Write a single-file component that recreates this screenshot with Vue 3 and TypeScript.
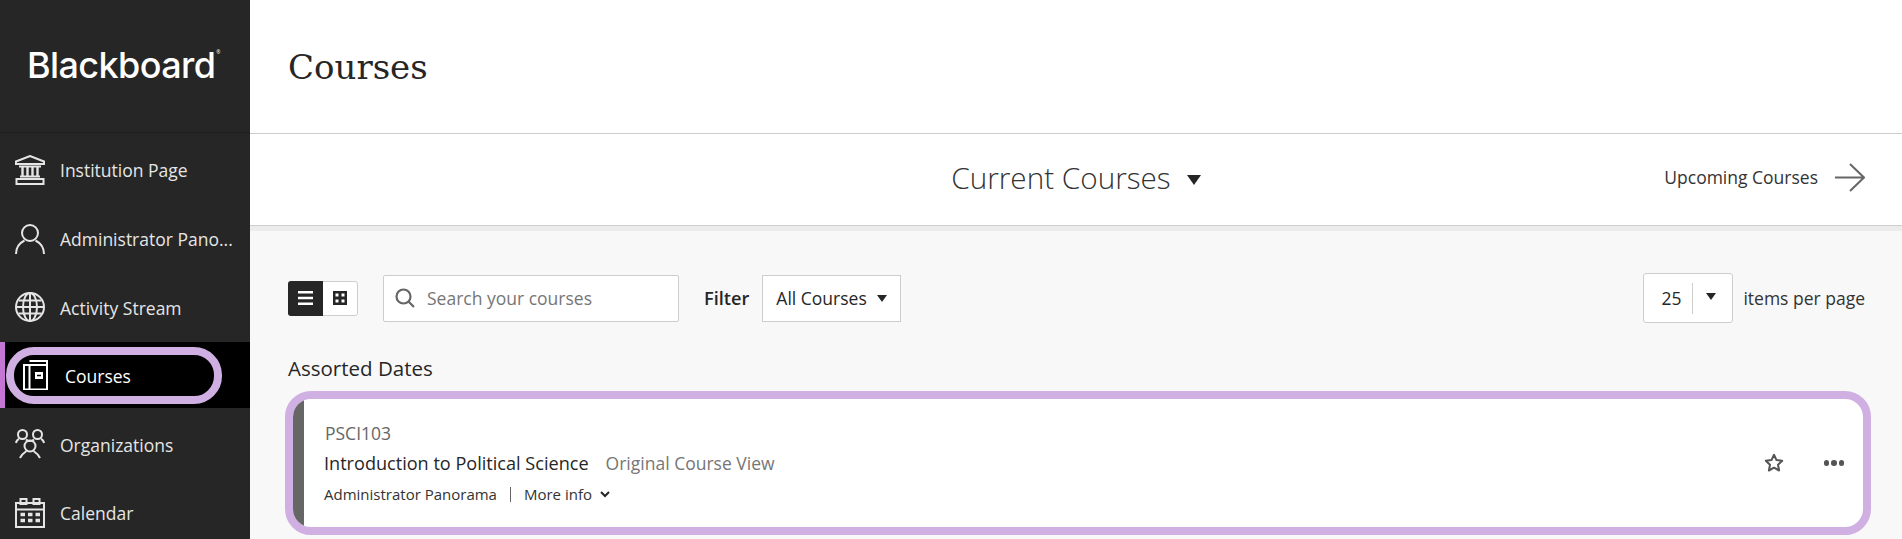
<script setup lang="ts">
interface NavItem { label: string; icon: string; active?: boolean }
const nav: NavItem[] = [
  { label: 'Institution Page', icon: 'inst' },
  { label: 'Administrator Pano...', icon: 'user' },
  { label: 'Activity Stream', icon: 'globe' },
  { label: 'Courses', icon: 'courses', active: true },
  { label: 'Organizations', icon: 'orgs' },
  { label: 'Calendar', icon: 'cal' },
]
</script>

<template>
  <div class="page">
    <aside class="side">
      <div class="logo"><span class="logo-text">Blackboard</span><span class="reg">®</span></div>
      <nav class="nav">
        <a v-for="n in nav" :key="n.label" class="item" :class="{ active: n.active }">
          <span class="ring">
            <svg v-if="n.icon === 'courses'" class="ico book" viewBox="0 0 25 30" fill="none" stroke="currentColor" stroke-width="2">
              <path d="M6.500 1h17.500v3M1 5h23v24.500H1zM6.500 5v24.500" />
              <rect x="12" y="12" width="8" height="7" fill="#fff" stroke="none" />
              <path d="M14 15.500h4" stroke="#000" stroke-width="1.500" />
            </svg>
            <svg v-else class="ico" viewBox="0 0 30 30" fill="none" stroke="currentColor" stroke-width="2">
              <template v-if="n.icon === 'inst'">
                <path d="M1 6.500 15 1l14 5.500V9H1z" />
                <path d="M4 11.500h22M5 21.500h20" />
                <path d="M7.500 12v9M12.500 12v9M17.500 12v9M22.500 12v9" stroke-width="2.400" />
                <path d="M1.500 24h27v5h-27z" />
              </template>
              <template v-else-if="n.icon === 'user'">
                <circle cx="15" cy="9" r="8" />
                <path d="M1 30c0-7 3.500-11 8.500-13.500M29 30c0-7-3.500-11-8.500-13.500" />
              </template>
              <template v-else-if="n.icon === 'globe'">
                <circle cx="15" cy="15" r="14" />
                <ellipse cx="15" cy="15" rx="7" ry="14" />
                <path d="M15 1v28M3.500 8.500h23M1 15h28M3.500 21.500h23" />
              </template>
              <template v-else-if="n.icon === 'orgs'">
                <circle cx="7.500" cy="5.500" r="4.500" />
                <circle cx="22.500" cy="5.500" r="4.500" />
                <circle cx="15" cy="17" r="5.500" />
                <path d="M1 14c.500-2.500 1.500-3.500 3-4M29 14c-.500-2.500-1.500-3.500-3-4M11 10.500c1 1 2.500 1.500 4 1.500s3-.500 4-1.500M5 29c1.500-3 3.500-5 6.500-7M25 29c-1.500-3-3.500-5-6.500-7" />
              </template>
              <template v-else>
                <path d="M1 5h28v24H1zM1 11.500h28" />
                <rect x="5.500" y="1" width="6" height="5" />
                <rect x="18.500" y="1" width="6" height="5" />
                <path d="M5.500 16.500h4.500M13 16.500h4.500M20.500 16.500h4.500M5.500 22.500h4.500M13 22.500h4.500M20.500 22.500h4.500" stroke-width="3.500" />
              </template>
            </svg>
            <span class="label">{{ n.label }}</span>
          </span>
        </a>
      </nav>
    </aside>
    <main class="main">
      <header class="head"><h1>Courses</h1></header>
      <section class="tabs">
        <div class="current">
          <span>Current Courses</span>
          <i class="tri big"></i>
        </div>
        <div class="upcoming">
          <span>Upcoming Courses</span>
          <svg viewBox="0 0 30 29" class="arrow" fill="none" stroke="#666" stroke-width="2"><path d="M0 14.500h29M15 1l14 13.500L15 28" /></svg>
        </div>
      </section>
      <section class="body">
        <div class="toolbar">
          <div class="toggle">
            <span class="tg on">
              <svg viewBox="0 0 15 14" width="15" height="14" fill="#fff"><path d="M0 0h15v2.600H0zM0 5.700h15v2.600H0zM0 11.400h15V14H0z" /></svg>
            </span>
            <span class="tg">
              <svg viewBox="0 0 14 14" width="14" height="14" fill="#262626"><path d="M0 0h14v14H0zM2.500 2.500v3h3v-3zM8.500 2.500v3h3v-3zM2.500 8.500v3h3v-3zM8.500 8.500v3h3v-3z" fill-rule="evenodd" /></svg>
            </span>
          </div>
          <div class="search">
            <svg viewBox="0 0 20 20" width="20" height="20" fill="none" stroke="#666" stroke-width="2.200"><circle cx="8.500" cy="8.500" r="7" /><path d="M13.500 13.500l5.500 5.500" /></svg>
            <span>Search your courses</span>
          </div>
          <b class="filter">Filter</b>
          <div class="select"><span>All Courses</span><i class="tri small"></i></div>
          <div class="pager">
            <div class="per"><span class="num">25</span><span class="sep"></span><i class="tri small up"></i></div>
            <span class="pp">items per page</span>
          </div>
        </div>
        <h2 class="group">Assorted Dates</h2>
        <article class="card">
          <div class="stripe"></div>
          <div class="info">
            <div class="code">PSCI103</div>
            <div class="title"><span class="t">Introduction to Political Science</span><span class="view">Original Course View</span></div>
            <div class="meta"><span>Administrator Panorama</span><span class="bar"></span><span>More info</span>
              <svg viewBox="0 0 10 7" width="10" height="7" fill="none" stroke="#262626" stroke-width="2"><path d="M1 1l4 4 4-4" /></svg>
            </div>
          </div>
          <div class="acts">
            <svg viewBox="0 0 20 20" width="20" height="20" fill="none" stroke="#555" stroke-width="2" stroke-linejoin="round"><path d="M10 1.800l2.500 5.300 5.700.700-4.200 4 1.100 5.700-5.100-2.800-5.100 2.800 1.100-5.700-4.200-4 5.700-.700z" /></svg>
            <span class="dots"><i></i><i></i><i></i></span>
          </div>
        </article>
      </section>
    </main>
  </div>
</template>

<style>
html, body { margin: 0; background: #f8f8f8; }
</style>

<style scoped>
.page { display: flex; width: 1902px; height: 539px; overflow: hidden; font-family: "Open Sans", sans-serif; color: #262626; }
.side { width: 250px; flex: none; background: #262626; color: #e5e5e5; }
.logo { border-bottom: 1px solid #1d1d1d; display: flex; align-items: center; color: #fff; padding: 0 0 3px 27px; height: 129px; }
.logo-text { font-family: Inter, sans-serif; font-size: 36px; font-weight: 500; letter-spacing: -0.6px; }
.reg { font-size: 5px; align-self: flex-start; margin-top: 49px; margin-left: 1px; }
.nav { display: flex; flex-direction: column; gap: 2px; padding-top: 3.700px; }
.item { height: 66.600px; display: flex; align-items: center; padding-left: 15px; }
.ring { display: flex; align-items: center; gap: 15px; min-width: 0; }
.ico { width: 30px; height: 30px; flex: none; color: #e5e5e5; }
.label { font-size: 17.500px; white-space: nowrap; position: relative; top: 0.500px; }
.item.active { background: #000; color: #fff; border-left: 5px solid #c575d4; padding-left: 1px; height: 66px; margin-bottom: 0.600px; }
.item.active .ico { color: #fff; width: 25px; height: 30px; }
.item.active .ring { width: 191px; height: 41px; border: 8px solid #d0afe3; border-radius: 28px; padding-left: 9px; gap: 17px; }
.main { flex: 1; min-width: 0; display: flex; flex-direction: column; }
.head { height: 133px; background: #fff; border-bottom: 1px solid #cdcdcd; display: flex; align-items: center; padding-left: 38px; }
h1 { margin: 0; font-family: "DejaVu Serif", serif; font-weight: 400; font-size: 34px; color: #262626; }
.tabs { background: #fff; border-bottom: 1px solid #cdcdcd; box-shadow: 0 5px 0 #ececec; position: relative; z-index: 1; display: flex; align-items: center; justify-content: center; padding-bottom: 5px; box-sizing: border-box; height: 92px; }
.current { display: flex; align-items: center; gap: 16px; font-size: 29.700px; font-weight: 300; color: #333; }
.upcoming { position: absolute; right: 37px; top: 0; bottom: 5px; display: flex; align-items: center; gap: 17px; font-size: 17.500px; color: #333; }
.arrow { width: 30px; height: 29px; }
.tri { display: inline-block; width: 0; height: 0; border-style: solid; border-color: #262626 transparent transparent; flex: none; }
.tri.big { border-width: 10px 7.500px 0; margin-top: 6px; }
.tri.small { border-width: 7px 5px 0; }
.body { flex: 1; background: #f8f8f8; padding: 47px 37px 0 38px; }
.toolbar { display: flex; align-items: center; height: 50px; }
.toggle { display: flex; width: 70px; height: 35px; border: 1px solid #cdcdcd; border-radius: 3px; background: #fff; box-sizing: border-box; }
.tg { flex: 1; display: flex; align-items: center; justify-content: center; }
.tg.on { background: #262626; border-radius: 3px 0 0 3px; margin: -1px 0 -1px -1px; }
.search { margin-left: 25px; width: 296px; height: 47px; box-sizing: border-box; border: 1px solid #cdcdcd; border-radius: 2px; background: #fff; display: flex; align-items: center; gap: 12px; padding-left: 11px; font-size: 17.500px; color: #767676; }
.filter { margin-left: 25px; font-size: 18.200px; font-weight: 600; }
.select { margin-left: 13px; width: 139px; height: 47px; box-sizing: border-box; border: 1px solid #cdcdcd; background: #fff; display: flex; align-items: center; justify-content: space-between; padding: 0 13px; font-size: 17.500px; color: #262626; white-space: nowrap; }
.pager { margin-left: auto; display: flex; align-items: center; gap: 10px; }
.per { width: 90px; height: 50px; box-sizing: border-box; border: 1px solid #cdcdcd; border-radius: 3px; background: #fff; display: flex; align-items: center; padding-left: 17px; font-size: 17.500px; }
.num { width: 31px; }
.sep { width: 1px; height: 31px; background: #cdcdcd; flex: none; }
.tri.up { margin-left: 13px; margin-top: -3px; }
.pp { font-size: 17.500px; color: #333; }
.group { margin: 32px 0 0; font-size: 20.500px; font-weight: 500; line-height: 27px; color: #262626; }
.card { margin: 9px -6px 0 -3px; height: 144px; box-sizing: border-box; background: #fff; border: 8px solid #d0afe3; border-radius: 26px; display: flex; overflow: hidden; }
.stripe { width: 11px; background: #666; flex: none; }
.info { padding: 19px 0 0 20px; flex: 1; }
.code { font-size: 17.500px; color: #666; line-height: 30px; padding-left: 1px; }
.title { font-size: 18.100px; line-height: 30px; white-space: nowrap; }
.title .t { font-weight: 500; }
.title .view { color: #767676; margin-left: 17px; font-size: 17.500px; }
.meta { font-size: 15px; line-height: 32px; color: #333; display: flex; align-items: center; gap: 8px; }
.bar { width: 1px; height: 15px; background: #666; margin: 0 5px; }
.acts { display: flex; align-items: center; gap: 40px; padding: 0 19px 0 0; }
.dots { display: flex; gap: 2px; }
.dots i { width: 5.500px; height: 5.500px; border-radius: 50%; background: #555; }
</style>
